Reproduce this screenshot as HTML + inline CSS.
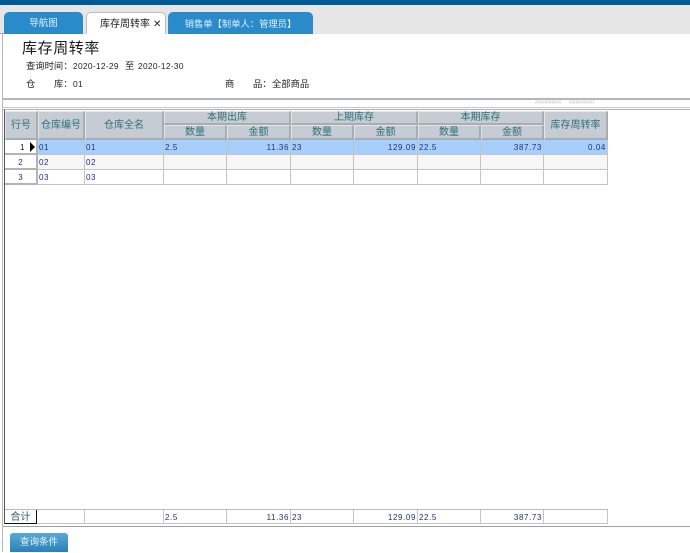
<!DOCTYPE html>
<html lang="zh">
<head>
<meta charset="utf-8">
<style>
html,body{margin:0;padding:0;background:#fff}
body{width:690px;height:552px;position:relative;overflow:hidden;font-family:"Liberation Sans","WenQuanYi Zen Hei","Noto Sans CJK SC",sans-serif}
div{position:absolute;box-sizing:border-box;white-space:nowrap}
.tab{top:12px;height:22px;background:#2a8bcb;color:#dff0fa;border-radius:5px 5px 0 0;font-size:9.5px;line-height:24px;text-align:center}
.h{background:#c6ccd4;color:#2f6f78;font-size:10px;text-align:center;border-right:2px solid #a9adb2;border-bottom:2px solid #a9adb2;border-top:1px solid #e4e6e8;border-left:1px solid #e4e6e8}
.c{font-size:8px;color:#1c2f80;line-height:15px;padding:0 1px;border-right:1px solid #c4c4c4;border-bottom:1px solid #c4c4c4;letter-spacing:.6px}
.r{text-align:right}
.n{font-size:8px;color:#1c2f80;text-align:center;background:#fff;border-right:2px solid #b4b4b4;border-bottom:2px solid #b4b4b4;line-height:15px}
.l{font-size:9.3px;color:#222;line-height:13px}
.d{font-size:8.4px;letter-spacing:.3px;color:#222;line-height:13px}
</style>
</head>
<body>
<div style="left:0;top:0;width:690px;height:5px;background:#005a96"></div>
<div style="left:0;top:5px;width:690px;height:29px;background:#e6e6e6"></div>
<div style="left:0;top:33px;width:4px;height:1px;background:#aaa"></div>
<div class="tab" style="left:4px;width:79px">导航图</div>
<div class="tab" style="left:86px;width:80px;background:#fff;border:1px solid #bbb;border-bottom:0;color:#222;line-height:23px;font-size:10px;text-align:left;padding-left:13px">库存周转率<span style="font-size:10px;margin-left:3px">✕</span></div>
<div class="tab" style="left:168px;width:145px;font-size:9.3px">销售单【制单人：管理员】</div>

<div style="left:2px;top:34px;width:1px;height:518px;background:#b8b8b8"></div>

<div style="left:22px;top:40px;font-size:15px;line-height:18px;color:#1a1a1a;letter-spacing:.6px">库存周转率</div>
<div class="l" style="left:26px;top:60px">查询时间：</div>
<div class="d" style="left:73px;top:60px">2020-12-29</div>
<div class="l" style="left:125px;top:60px">至</div>
<div class="d" style="left:138px;top:60px">2020-12-30</div>
<div class="l" style="left:26px;top:78px">仓</div>
<div class="l" style="left:54px;top:78px">库：</div>
<div class="d" style="left:73px;top:78px">01</div>
<div class="l" style="left:225px;top:78px">商</div>
<div class="l" style="left:253px;top:78px">品：</div>
<div class="l" style="left:272px;top:78px">全部商品</div>

<div style="left:3px;top:98px;width:687px;height:2px;background:#b4b6ba"></div>
<div style="left:535px;top:100px;width:26px;height:6px;font-size:6px;line-height:6px;color:#c4c4c4;overflow:hidden">########</div>
<div style="left:569px;top:100px;width:25px;height:6px;font-size:6px;line-height:6px;color:#c4c4c4;overflow:hidden">########</div>
<div style="left:3px;top:107px;width:687px;height:1px;background:#c8c8c8"></div>
<div style="left:3px;top:109px;width:687px;height:1px;background:#b0b0b0"></div>
<div style="left:4px;top:110px;width:1px;height:414px;background:#555"></div>

<!-- header -->
<div class="h" style="left:5px;top:111px;width:33px;height:29px;line-height:27px">行号</div>
<div class="h" style="left:38px;top:111px;width:47px;height:29px;line-height:27px">仓库编号</div>
<div class="h" style="left:85px;top:111px;width:79px;height:29px;line-height:27px">仓库全名</div>
<div class="h" style="left:164px;top:111px;width:127px;height:14px;line-height:12px">本期出库</div>
<div class="h" style="left:164px;top:125px;width:63px;height:15px;line-height:14px">数量</div>
<div class="h" style="left:227px;top:125px;width:64px;height:15px;line-height:14px">金额</div>
<div class="h" style="left:291px;top:111px;width:127px;height:14px;line-height:12px">上期库存</div>
<div class="h" style="left:291px;top:125px;width:63px;height:15px;line-height:14px">数量</div>
<div class="h" style="left:354px;top:125px;width:64px;height:15px;line-height:14px">金额</div>
<div class="h" style="left:418px;top:111px;width:126px;height:14px;line-height:12px">本期库存</div>
<div class="h" style="left:418px;top:125px;width:63px;height:15px;line-height:14px">数量</div>
<div class="h" style="left:481px;top:125px;width:63px;height:15px;line-height:14px">金额</div>
<div class="h" style="left:544px;top:111px;width:64px;height:29px;line-height:27px">库存周转率</div>

<!-- row 1 -->
<div style="left:38px;top:140px;width:570px;height:15px;background:#a6d0fb"></div>
<div class="n" style="left:5px;top:140px;width:33px;height:15px;text-align:left;padding-left:15px;color:#111">1</div>
<svg style="position:absolute;left:29px;top:142px" width="7" height="10"><path d="M1 0L6 5L1 10Z" fill="#000"/></svg>
<div class="c" style="left:38px;top:140px;width:47px;height:15px">01</div>
<div class="c" style="left:85px;top:140px;width:79px;height:15px">01</div>
<div class="c" style="left:164px;top:140px;width:63px;height:15px">2.5</div>
<div class="c r" style="left:227px;top:140px;width:64px;height:15px">11.36</div>
<div class="c" style="left:291px;top:140px;width:63px;height:15px">23</div>
<div class="c r" style="left:354px;top:140px;width:64px;height:15px">129.09</div>
<div class="c" style="left:418px;top:140px;width:63px;height:15px">22.5</div>
<div class="c r" style="left:481px;top:140px;width:63px;height:15px">387.73</div>
<div class="c r" style="left:544px;top:140px;width:64px;height:15px">0.04</div>

<!-- row 2 -->
<div style="left:38px;top:155px;width:570px;height:15px;background:#f6f6f6"></div>
<div class="n" style="left:5px;top:155px;width:33px;height:15px">2</div>
<div class="c" style="left:38px;top:155px;width:47px;height:15px">02</div>
<div class="c" style="left:85px;top:155px;width:79px;height:15px">02</div>
<div class="c" style="left:164px;top:155px;width:63px;height:15px"></div>
<div class="c" style="left:227px;top:155px;width:64px;height:15px"></div>
<div class="c" style="left:291px;top:155px;width:63px;height:15px"></div>
<div class="c" style="left:354px;top:155px;width:64px;height:15px"></div>
<div class="c" style="left:418px;top:155px;width:63px;height:15px"></div>
<div class="c" style="left:481px;top:155px;width:63px;height:15px"></div>
<div class="c" style="left:544px;top:155px;width:64px;height:15px"></div>

<!-- row 3 -->
<div class="n" style="left:5px;top:170px;width:33px;height:15px">3</div>
<div class="c" style="left:38px;top:170px;width:47px;height:15px">03</div>
<div class="c" style="left:85px;top:170px;width:79px;height:15px">03</div>
<div class="c" style="left:164px;top:170px;width:63px;height:15px"></div>
<div class="c" style="left:227px;top:170px;width:64px;height:15px"></div>
<div class="c" style="left:291px;top:170px;width:63px;height:15px"></div>
<div class="c" style="left:354px;top:170px;width:64px;height:15px"></div>
<div class="c" style="left:418px;top:170px;width:63px;height:15px"></div>
<div class="c" style="left:481px;top:170px;width:63px;height:15px"></div>
<div class="c" style="left:544px;top:170px;width:64px;height:15px"></div>

<!-- footer -->
<div style="left:5px;top:509px;width:603px;height:1px;background:#bbb"></div>
<div style="left:5px;top:510px;width:32px;height:14px;border-right:1px solid #111;border-bottom:1px solid #111;font-size:10px;line-height:15px;color:#1d5a60;text-align:center">合计</div>
<div class="c" style="left:37px;top:510px;width:48px;height:14px"></div>
<div class="c" style="left:85px;top:510px;width:79px;height:14px"></div>
<div class="c" style="left:164px;top:510px;width:63px;height:14px">2.5</div>
<div class="c r" style="left:227px;top:510px;width:64px;height:14px">11.36</div>
<div class="c" style="left:291px;top:510px;width:63px;height:14px">23</div>
<div class="c r" style="left:354px;top:510px;width:64px;height:14px">129.09</div>
<div class="c" style="left:418px;top:510px;width:63px;height:14px">22.5</div>
<div class="c r" style="left:481px;top:510px;width:63px;height:14px">387.73</div>
<div class="c" style="left:544px;top:510px;width:64px;height:14px"></div>

<div style="left:3px;top:526px;width:687px;height:1px;background:#a0a0a0"></div>

<div style="left:10px;top:533px;width:58px;height:19px;border-radius:3px 3px 0 0;background:linear-gradient(#58a9d6,#2a80ba);color:#e8f4fb;font-size:9.5px;line-height:20px;text-align:center">查询条件</div>
</body>
</html>
